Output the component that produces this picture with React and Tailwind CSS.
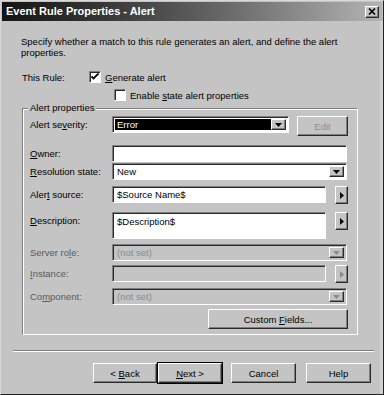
import React from "react";

const raised =
  "border border-t-white border-l-white border-b-[#2a2a2a] border-r-[#2a2a2a] shadow-[inset_-1px_-1px_0_#7e7e7e]";
const sunken =
  "border border-t-[#7e7e7e] border-l-[#7e7e7e] border-b-white border-r-white shadow-[inset_1px_1px_0_#2a2a2a]";

function DownArrow({ disabled }) {
  return (
    <div className={`${raised} flex h-full w-[15px] items-center justify-center bg-[#c4c4c4]`}>
      <svg width="7" height="4" viewBox="0 0 7 4">
        <path d="M0 0h7L3.5 4z" fill={disabled ? "#8a8a8a" : "#000"} />
      </svg>
    </div>
  );
}

function ArrowBtn({ disabled }) {
  return (
    <div className={`${raised} ml-[9px] flex h-[18px] w-[13px] items-center justify-center bg-[#c4c4c4]`}>
      <svg width="4" height="7" viewBox="0 0 4 7">
        <path d="M0 0v7l4-3.5z" fill={disabled ? "#8a8a8a" : "#000"} />
      </svg>
    </div>
  );
}

function Combo({ value, width, selected, disabled }) {
  return (
    <div
      className={`${sunken} flex h-[17px] items-stretch p-[2px] ${disabled ? "bg-[#c4c4c4]" : "bg-white"}`}
      style={{ width }}
    >
      <div
        className={`flex flex-1 items-center px-[2px] ${
          selected ? "bg-black text-white" : disabled ? "text-[#8a8a8a]" : "text-black"
        }`}
      >
        {value}
      </div>
      <DownArrow disabled={disabled} />
    </div>
  );
}

function Field({ value, width = 214, height = 17, disabled, top }) {
  return (
    <div
      className={`${sunken} flex px-[4px] ${top ? "items-start pt-[3px]" : "items-center"} ${
        disabled ? "bg-[#c4c4c4]" : "bg-white"
      }`}
      style={{ width, height }}
    >
      {value}
    </div>
  );
}

function Row({ label, mt, dim, children }) {
  return (
    <div className="flex items-start" style={{ marginTop: mt }}>
      <div className={`w-[82px] pt-[3px] ${dim ? "text-[#5a5a5a]" : ""}`}>{label}</div>
      <div className="flex items-start">{children}</div>
    </div>
  );
}

function Check({ checked }) {
  return (
    <div className={`${sunken} flex h-[12px] w-[12px] items-center justify-center bg-white`}>
      {checked && (
        <svg width="8" height="8" viewBox="0 0 8 8">
          <path d="M0.5 3.5l2 2 5-5" stroke="#000" strokeWidth="1.8" fill="none" />
        </svg>
      )}
    </div>
  );
}

function Button({ children, def, disabled, w }) {
  return (
    <div className={def ? "border border-black" : ""}>
      <div
        className={`${raised} flex h-[20px] items-center justify-center bg-[#c4c4c4] ${
          disabled ? "text-[#8e8e8e]" : "text-black"
        }`}
        style={{ width: w }}
      >
        <span>{children}</span>
      </div>
    </div>
  );
}

export default function App() {
  return (
    <div
      className="flex h-[395px] w-[384px] flex-col border border-t-[#d8d8d8] border-l-[#d8d8d8] border-b-[#222] border-r-[#222] bg-[#c4c4c4] text-[9.5px] leading-[11px] text-black"
      style={{ fontFamily: '"Liberation Sans", Arial, sans-serif' }}
    >
      <div className="mx-[1px] mt-[1px] flex h-[19px] items-center justify-between bg-gradient-to-r from-[#141414] via-[#5a5a5a] to-[#b4b4b4] pl-[4px] pr-[3px]">
        <span className="text-[11px] font-bold text-white">Event Rule Properties - Alert</span>
        <div className={`${raised} flex h-[12px] w-[14px] items-center justify-center bg-[#c4c4c4]`}>
          <svg width="8" height="7" viewBox="0 0 8 7">
            <path d="M1 0.5l6 6M7 0.5l-6 6" stroke="#000" strokeWidth="1.6" />
          </svg>
        </div>
      </div>

      <div className="flex flex-1 flex-col border-r-[3px] border-r-[#d0d0d0] pl-[20px] pr-[9px]">
        <p className="mt-[15px]">
          Specify whether a match to this rule generates an alert, and define the alert
          <br />
          properties.
        </p>

        <div className="mt-[13px] flex items-center">
          <span className="w-[68px] pl-[1px]">This Rule:</span>
          <Check checked />
          <span className="ml-[4px]">
            <u>G</u>enerate alert
          </span>
        </div>
        <div className="mt-[6px] flex items-center pl-[93px]">
          <Check />
          <span className="ml-[4px]">
            Enable <u>s</u>tate alert properties
          </span>
        </div>

        <div className="relative mt-[7px] ml-[1px] h-[227px] w-[336px] border border-t-[#7e7e7e] border-l-[#7e7e7e] border-b-white border-r-white shadow-[inset_1px_1px_0_white,1px_1px_0_#7e7e7e_inset]">
          <span className="absolute -top-[7px] left-[5px] bg-[#c4c4c4] px-[2px]">Alert properties</span>
          <div className="flex flex-col pl-[7px]">
            <Row label={<>Alert se<u>v</u>erity:</>} mt={7}>
              <Combo value="Error" width={177} selected />
              <div className="ml-[8px]">
                <Button w={51} disabled>
                  Edit
                </Button>
              </div>
            </Row>
            <Row label={<><u>O</u>wner:</>} mt={9}>
              <Field value="" width={235} />
            </Row>
            <Row label={<><u>R</u>esolution state:</>} mt={1}>
              <Combo value="New" width={235} />
            </Row>
            <Row label={<>Aler<u>t</u> source:</>} mt={6}>
              <Field value="$Source Name$" />
              <ArrowBtn />
            </Row>
            <Row label={<><u>D</u>escription:</>} mt={8}>
              <Field value="$Description$" height={27} top />
              <ArrowBtn />
            </Row>
            <Row label={<>Server ro<u>l</u>e:</>} mt={5} dim>
              <Combo value="(not set)" width={235} disabled />
            </Row>
            <Row label={<><u>I</u>nstance:</>} mt={4} dim>
              <Field value="" disabled />
              <ArrowBtn disabled />
            </Row>
            <Row label={<>Co<u>m</u>ponent:</>} mt={5} dim>
              <Combo value="(not set)" width={235} disabled />
            </Row>
            <div className="mt-[4px] flex justify-end pr-[9px]">
              <Button w={140}>
                Custom <u>F</u>ields...
              </Button>
            </div>
          </div>
        </div>

        <div className="mt-[15px] -ml-[8px] h-[2px] w-[361px] border-t border-t-[#7e7e7e] border-b border-b-white" />

        <div className="mt-[10px] flex items-start pl-[72px]">
          <div className="mt-[1px]">
            <Button w={64}>
              &lt; <u>B</u>ack
            </Button>
          </div>
          <Button w={64} def>
            <u>N</u>ext &gt;
          </Button>
          <div className="ml-[8px] mt-[1px]">
            <Button w={65}>Cancel</Button>
          </div>
          <div className="ml-[10px] mt-[1px]">
            <Button w={65}>Help</Button>
          </div>
        </div>
      </div>
    </div>
  );
}
